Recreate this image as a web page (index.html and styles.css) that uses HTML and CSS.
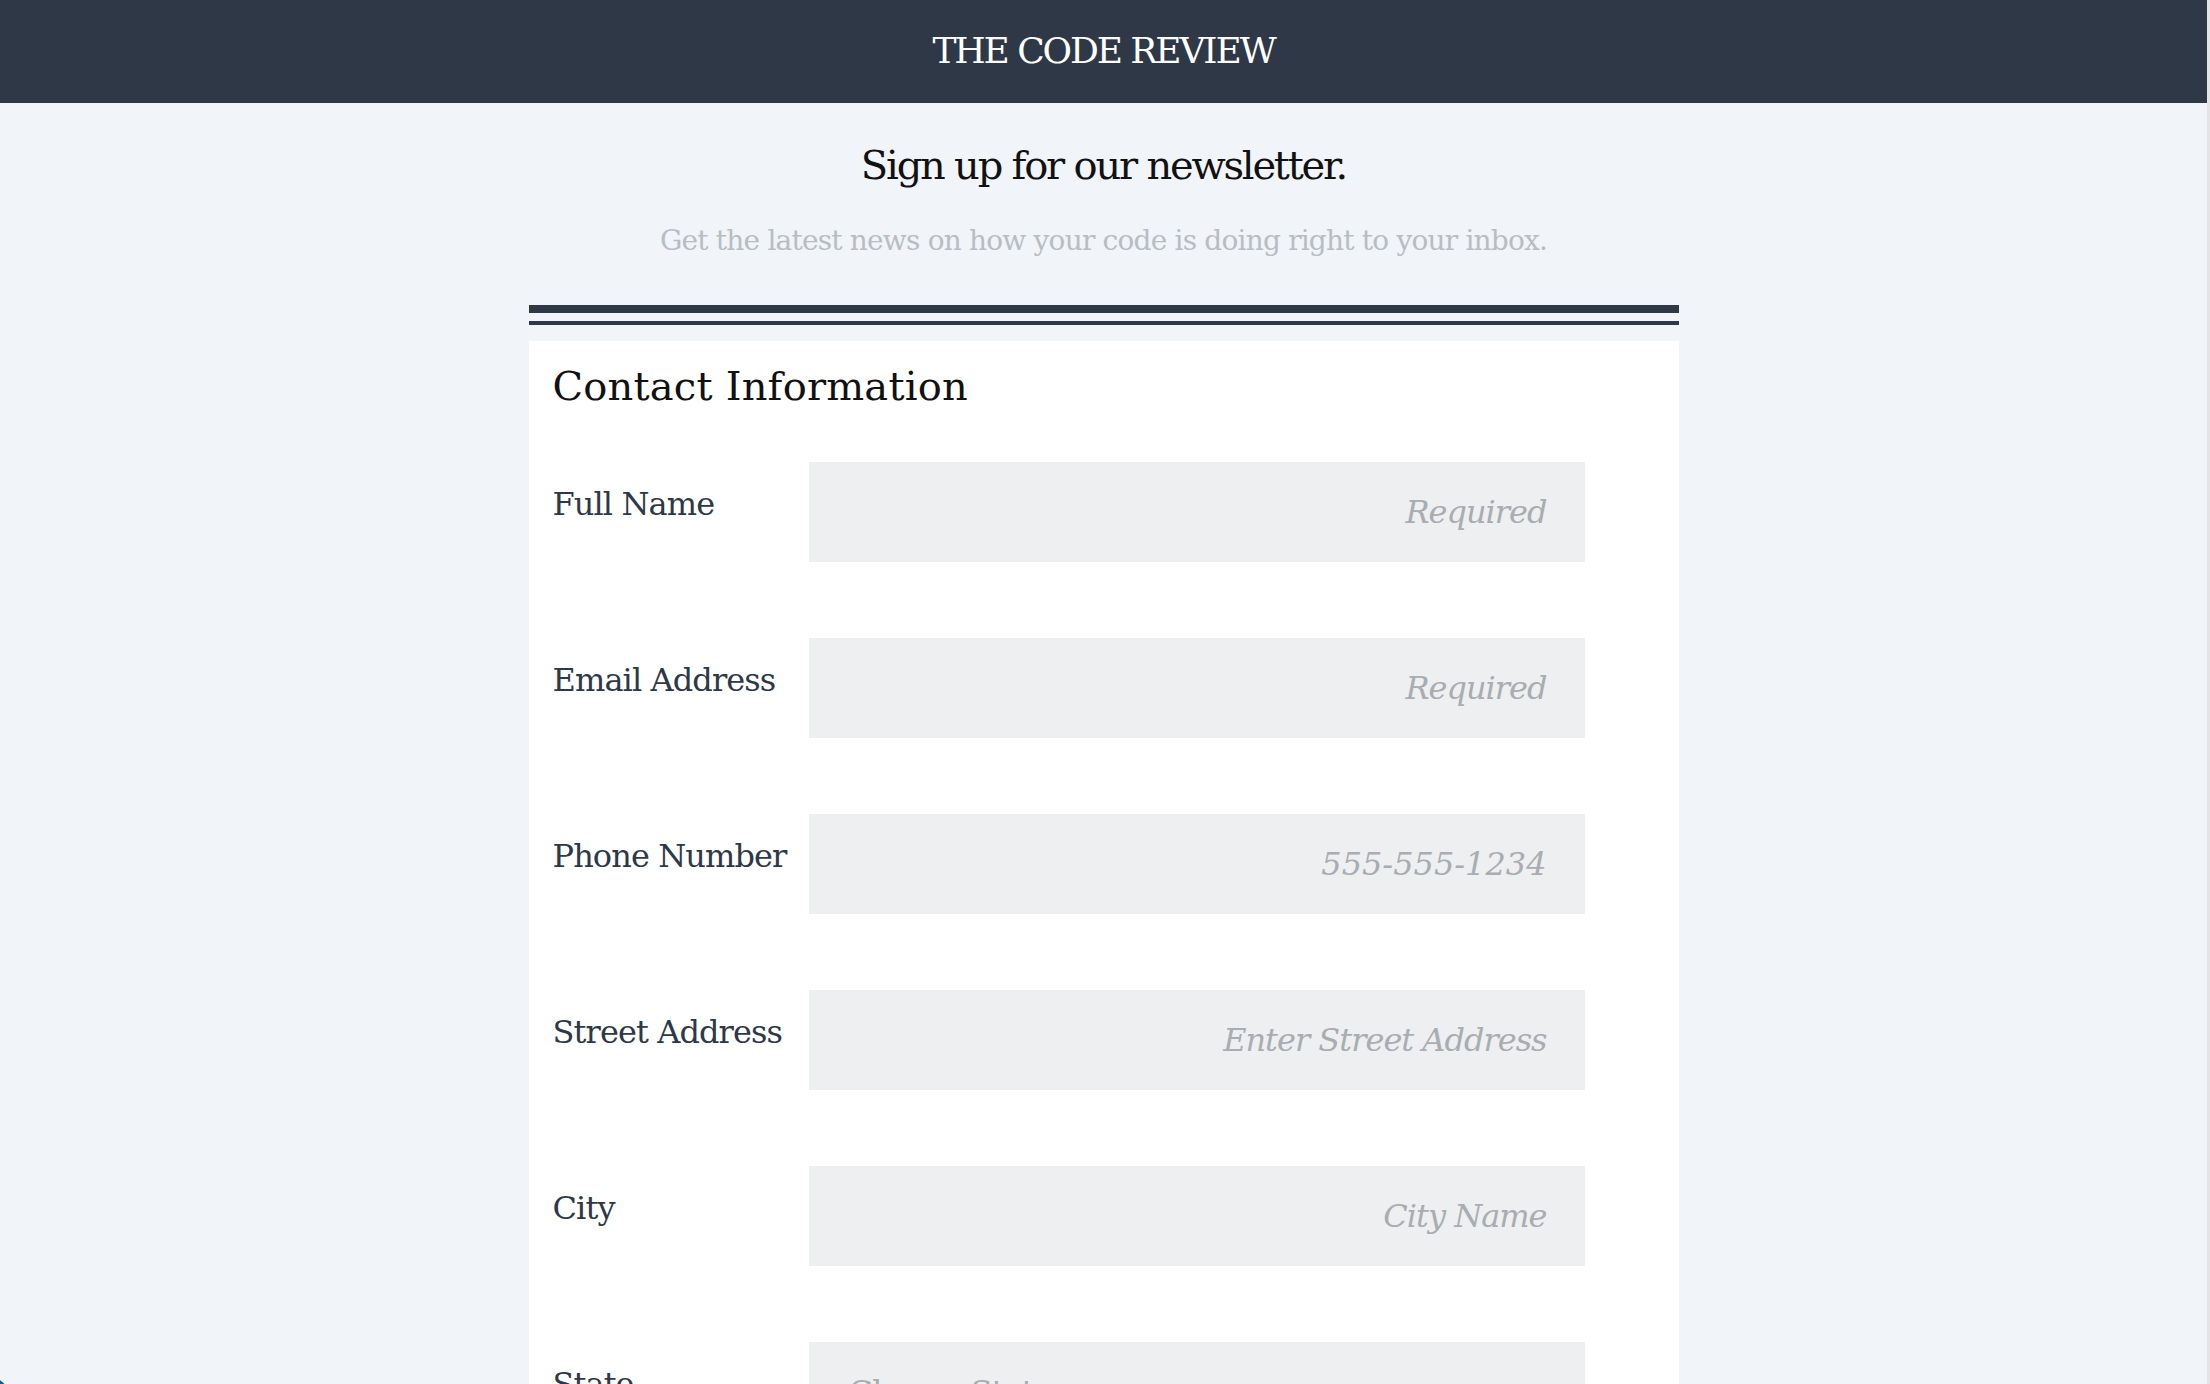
FILE: index.html
```html
<!DOCTYPE html>
<html lang="en">
<head>
<meta charset="utf-8">
<title>The Code Review</title>
<link rel="stylesheet" href="styles.css">
</head>
<body>
<div class="page">
  <header class="topbar">
    <h1 class="brand">THE CODE REVIEW</h1>
  </header>
  <main class="main">
    <h2 class="intro-title">Sign up for our newsletter.</h2>
    <p class="intro-text">Get the latest news on how your code is doing right to your inbox.</p>
    <div class="rule"></div>
    <form class="card">
      <h3 class="card-title">Contact Information</h3>
      <div class="rows">
        <div class="row">
          <label class="label" for="name">Full Name</label>
          <input class="field" id="name" type="text" placeholder="Required">
        </div>
        <div class="row">
          <label class="label" for="email">Email Address</label>
          <input class="field" id="email" type="email" placeholder="Required">
        </div>
        <div class="row">
          <label class="label" for="phone">Phone Number</label>
          <input class="field field-digits" id="phone" type="tel" placeholder="555-555-1234">
        </div>
        <div class="row">
          <label class="label" for="street">Street Address</label>
          <input class="field" id="street" type="text" placeholder="Enter Street Address">
        </div>
        <div class="row">
          <label class="label" for="city">City</label>
          <input class="field" id="city" type="text" placeholder="City Name">
        </div>
        <div class="row">
          <label class="label" for="state">State</label>
          <div class="field select"><span class="select-text">Choose State</span></div>
        </div>
      </div>
    </form>
  </main>
</div>
<div class="corner"></div>
</body>
</html>
```
FILE: styles.css
```css
html, body {
  margin: 0;
  padding: 0;
  height: 100%;
  overflow: hidden;
}
body {
  background: #f1f4f8;
  font-family: "DejaVu Serif", "Liberation Serif", serif;
  border-right: 3px solid #e4e4e4;
  box-sizing: border-box;
}
.page {
  min-height: 100%;
}
.topbar {
  background: #2e3846;
  padding: 29px 0 30px;
  text-align: center;
}
.brand {
  margin: 0;
  color: #ffffff;
  font-size: 36px;
  line-height: 44px;
  font-weight: normal;
  letter-spacing: -2.1px;
}
.main {
  width: 1150px;
  margin: 0 auto;
  padding-top: 38px;
}
.intro-title {
  margin: 0;
  text-align: center;
  font-size: 40px;
  line-height: 48px;
  font-weight: normal;
  color: #111;
  letter-spacing: -2.2px;
}
.intro-text {
  margin: 34px 0 0;
  text-align: center;
  font-size: 28px;
  line-height: 36px;
  color: #b9bdc2;
  letter-spacing: -0.8px;
}
.rule {
  margin-top: 46px;
  height: 8px;
  border-top: 8px solid #2e3846;
  border-bottom: 4px solid #2e3846;
}
.card {
  margin-top: 16px;
  background: #ffffff;
  padding: 21px 24px 200px;
}
.card-title {
  margin: 0;
  font-size: 40px;
  line-height: 48px;
  font-weight: normal;
  color: #111;
  letter-spacing: 0.2px;
}
.rows {
  margin-top: 52px;
  display: flex;
  flex-direction: column;
  gap: 76px;
}
.row {
  display: flex;
  align-items: flex-start;
}
.label {
  width: 256px;
  flex: none;
  padding-top: 22px;
  font-size: 32px;
  line-height: 40px;
  color: #2e3846;
  letter-spacing: -0.9px;
}
.field {
  width: 776px;
  height: 100px;
  box-sizing: border-box;
  border: 0;
  background: #eeeff1;
  padding: 0 38px;
  font-family: inherit;
  font-size: 32px;
  line-height: 40px;
  text-align: right;
  color: #2e3846;
  outline: none;
  margin: 0;
  letter-spacing: -1px;
}
.field-digits {
  letter-spacing: 0;
}
.field::placeholder {
  color: #a9adb1;
  font-style: italic;
}
.select {
  text-align: left;
  padding: 30px 40px 0;
  color: #a9adb1;
}
.corner {
  position: fixed;
  left: -24px;
  bottom: -26px;
  width: 32px;
  height: 32px;
  border-radius: 50%;
  background: #0f5f9e;
}
```
